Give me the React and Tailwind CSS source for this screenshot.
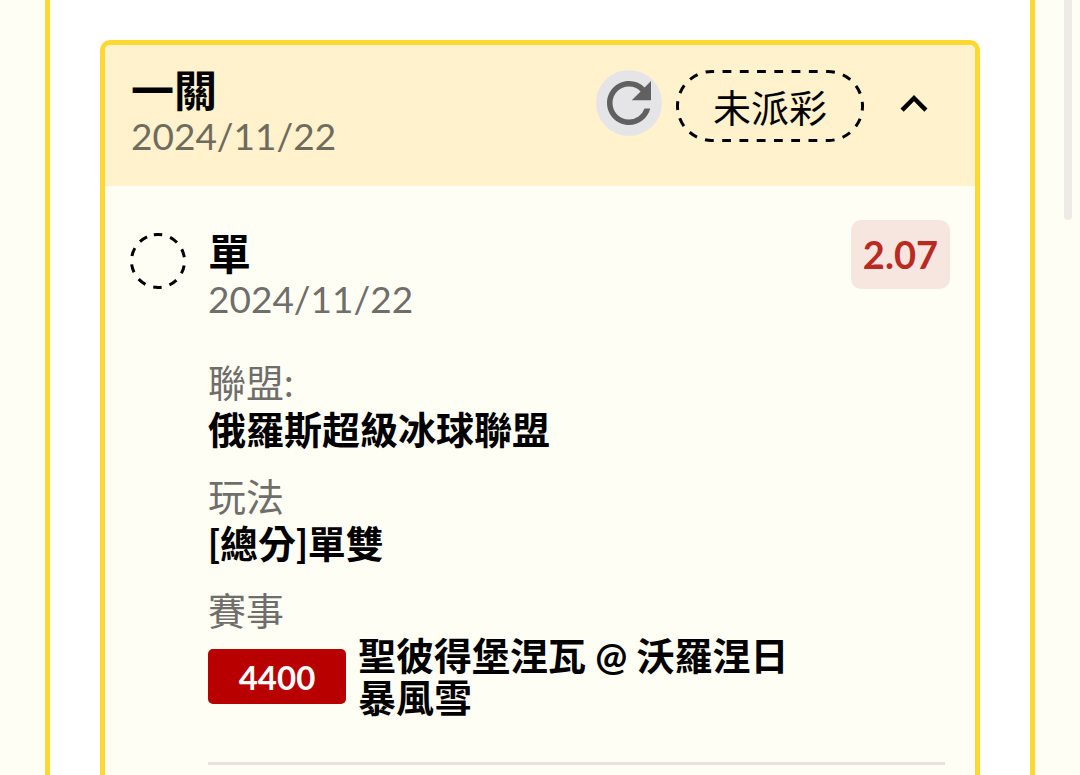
import { useState } from "react";
import { MdRefresh, MdKeyboardArrowUp, MdKeyboardArrowDown } from "react-icons/md";

const leg = {
    pick: '單',
    date: '2024/11/22',
    odds: '2.07',
    league: '俄羅斯超級冰球聯盟',
    play: '[總分]單雙',
    code: '4400',
    match: '聖彼得堡涅瓦 @ 沃羅涅日暴風雪',
}

function StatusPill({ children }) {
    return (
        <span className="relative flex items-center justify-center h-[72px] pt-[3px] px-[37px] text-[38px] text-black whitespace-nowrap">
            <svg className="absolute inset-0 w-full h-full overflow-visible" fill="none" aria-hidden="true">
                <rect
                    x="1.5" y="1.5" rx="34.5"
                    style={{ width: 'calc(100% - 3px)', height: 'calc(100% - 3px)' }}
                    stroke="#000" strokeWidth="3" strokeDasharray="8.8 8.46" strokeDashoffset="6.7" />
            </svg>
            {children}
        </span>
    )
}

function Field({ label, children }) {
    return (
        <div className="mb-[20px]">
            <dt className="text-[#6f6e6a] font-normal leading-[47px]">{label}</dt>
            <dd className="text-black font-bold leading-[47px]">{children}</dd>
        </div>
    )
}

export default function App() {
    const [open, setOpen] = useState(true)

    return (
        <div className="relative min-h-screen flex flex-col bg-[#fffef5] pl-[45px] pr-[45px] overflow-hidden font-[Lato,'Noto_Sans_CJK_TC',sans-serif]">
            <main className="flex-1 flex flex-col bg-white border-x-[5px] border-[#fdd830] px-[50px] pt-10">
                <section className="flex-1 bg-[#fffef5] border-[5px] border-b-0 border-[#fdd830] rounded-t-[10px]">
                    <header className="flex items-start justify-between h-[141px] pl-[26px] pr-[34px] pt-[24px] bg-[#fff2cd] rounded-t-[5px]">
                        <div>
                            <h1 className="text-[43px] leading-[44px] font-bold text-black">一關</h1>
                            <p className="text-[37px] leading-[46px] text-[#6f6b5d]">{leg.date}</p>
                        </div>
                        <div className="flex items-start pt-[1px]">
                            <button aria-label="重新整理" className="w-[66px] h-[66px] rounded-full bg-[#e5e5e8] text-[#606060] mr-[14px]">
                                <MdRefresh size={66} />
                            </button>
                            <StatusPill>未派彩</StatusPill>
                            <button
                                aria-label="展開"
                                aria-expanded={open}
                                onClick={() => setOpen(!open)}
                                className="ml-[23px] mt-[7px] text-black">
                                {open ? <MdKeyboardArrowUp size={54} /> : <MdKeyboardArrowDown size={54} />}
                            </button>
                        </div>
                    </header>

                    {open && (
                        <div className="flex items-start pl-[25px] pr-[25px] pt-[34px]">
                            <svg className="w-[56px] h-[56px] mt-[13px] mr-[22px] shrink-0" viewBox="0 0 56 56" fill="none" aria-hidden="true">
                                <circle cx="28" cy="28" r="26.5" stroke="#000" strokeWidth="3" strokeDasharray="8.4 8.25" transform="rotate(-99 28 28)" />
                            </svg>

                            <div className="flex-1">
                                <div className="flex items-start justify-between">
                                    <div className="pt-[12px]">
                                        <h2 className="text-[43px] leading-[44px] font-bold text-black">{leg.pick}</h2>
                                        <p className="text-[37px] leading-[46px] text-[#6f6e6a]">{leg.date}</p>
                                    </div>
                                    <strong className="rounded-[10px] bg-[#f7e6df] px-[12px] text-[38px] leading-[69px] font-bold text-[#b92a22]">
                                        {leg.odds}
                                    </strong>
                                </div>

                                <dl className="mt-[37px] text-[38px]">
                                    <Field label="聯盟:">{leg.league}</Field>
                                    <Field label="玩法">{leg.play}</Field>
                                    <dt className="text-[#6f6e6a] leading-[47px]">賽事</dt>
                                    <dd className="flex items-center text-black font-bold">
                                        <span className="w-[138px] h-[55px] mr-[12px] rounded-[5px] bg-[#b80000] text-white text-[33px] leading-[57px] text-center">
                                            {leg.code}
                                        </span>
                                        <span className="max-w-[450px] leading-[42px]">{leg.match}</span>
                                    </dd>
                                </dl>

                                <hr className="mt-[44px] mr-[5px] border-0 h-[3px] bg-[#e6e3dc]" />
                            </div>
                        </div>
                    )}
                </section>
            </main>
            <div className="absolute top-0 right-[8px] w-[8px] h-[220px] rounded-b-full bg-[#eeebe6]" />
        </div>
    )
}
